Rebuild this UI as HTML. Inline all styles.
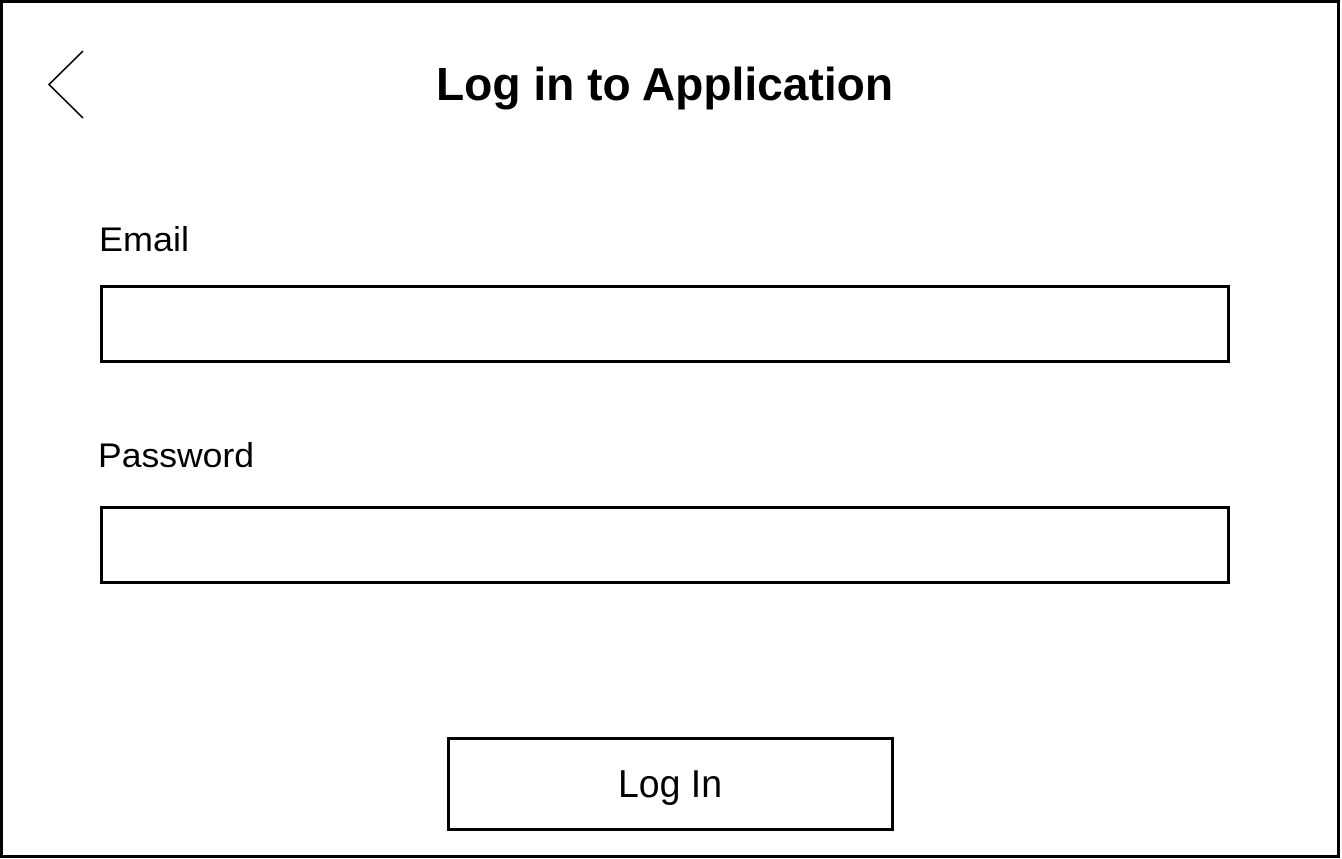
<!DOCTYPE html>
<html><head><meta charset="utf-8"><style>
html,body{margin:0;padding:0;background:#fff;}
body{width:1342px;height:859px;overflow:hidden;position:relative;}
svg{position:absolute;left:0;top:0;}
</style></head><body>
<svg width="1342" height="859" viewBox="0 0 1342 859" xmlns="http://www.w3.org/2000/svg">
<rect x="1.5" y="1.5" width="1337" height="855" fill="#fff" stroke="#000" stroke-width="3"/>
<path d="M83 51 L49 84.5 L83 118" fill="none" stroke="#000" stroke-width="1.6"/>
<text x="436" y="100" font-family="Liberation Sans, sans-serif" font-weight="bold" font-size="46" textLength="457" lengthAdjust="spacingAndGlyphs">Log in to Application</text>
<text x="99" y="251" font-family="Liberation Sans, sans-serif" font-size="34" textLength="90" lengthAdjust="spacingAndGlyphs">Email</text>
<rect x="101.5" y="286.5" width="1127" height="75" fill="none" stroke="#000" stroke-width="3"/>
<text x="98" y="467" font-family="Liberation Sans, sans-serif" font-size="34" textLength="156" lengthAdjust="spacingAndGlyphs">Password</text>
<rect x="101.5" y="507.5" width="1127" height="75" fill="none" stroke="#000" stroke-width="3"/>
<rect x="448.5" y="738.5" width="444" height="91" fill="none" stroke="#000" stroke-width="3"/>
<text x="618" y="797" font-family="Liberation Sans, sans-serif" font-size="39" textLength="104" lengthAdjust="spacingAndGlyphs">Log In</text>
</svg>
</body></html>
